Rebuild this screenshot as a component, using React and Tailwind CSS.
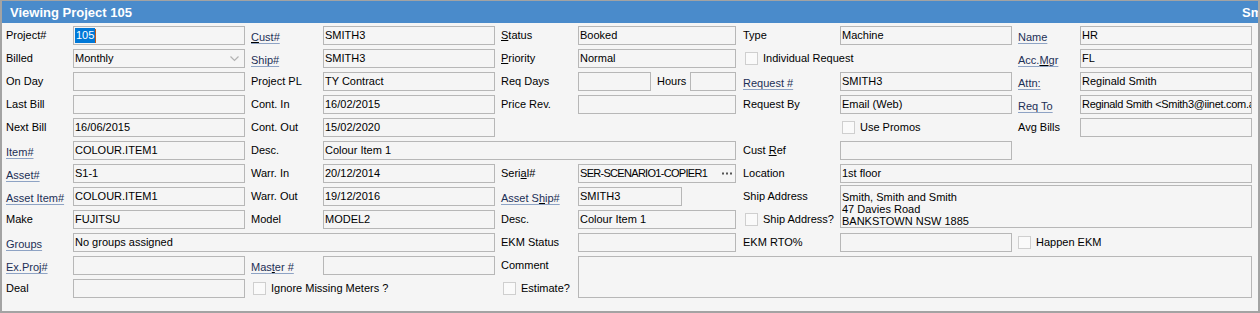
import React from "react";

const font = "font-['Liberation_Sans',Arial,sans-serif]";

function Label({ children, link, className = "" }) {
  if (link) {
    return (
      <div className={`flex items-center pt-[4px] whitespace-nowrap ${className}`}>
        <span className="text-[#1c2f55] underline underline-offset-[2px] decoration-[#8ea3c4]">{children}</span>
      </div>
    );
  }
  return (
    <div className={`flex items-center whitespace-nowrap text-black ${className}`}>
      <span>{children}</span>
    </div>
  );
}

// access key letter
function K({ children }) {
  return <span className="underline underline-offset-[1px] decoration-black">{children}</span>;
}

function Input({ children, className = "" }) {
  return (
    <div
      className={`h-[19px] border border-[#b7b7b7] bg-[#f5f5f5] pl-[1px] flex items-center whitespace-nowrap overflow-hidden text-black ${className}`}
    >
      {children}
    </div>
  );
}

function Check({ children, className = "" }) {
  return (
    <div className={`flex items-center gap-[5px] whitespace-nowrap ${className}`}>
      <span className="w-[13px] h-[13px] border border-[#cfcfcf] bg-[#fafafa] shrink-0" />
      <span>{children}</span>
    </div>
  );
}

function Empty() {
  return <div />;
}

export default function App() {
  return (
    <div
      className={`w-[1260px] h-[313px] overflow-hidden bg-[#f5f5f5] border-t border-l-2 border-r-2 border-b-2 border-[#a3a3a3] text-[11px] leading-[13px] ${font}`}
    >
      <div className="h-[22px] bg-[#4a8bcb] flex items-center justify-between pl-[8px] overflow-hidden">
        <span className="text-white font-bold text-[13px]">Viewing Project 105</span>
        <span className="text-white font-bold text-[13px] w-[16px] overflow-hidden whitespace-nowrap">Smith</span>
      </div>

      <div className="grid grid-cols-[67px_172px_78px_172px_83px_158px_104px_172px_68px_172px] grid-rows-[repeat(12,19px)] gap-y-[4px] pt-[3px] pl-[4px]">
        {/* row 1 */}
        <Label>Project#</Label>
        <Input>
          <span className="bg-[#0078d7] text-white px-[1px] leading-[15px]">105</span>
          <span className="w-[1px] h-[14px] bg-[#c05a1a]" />
        </Input>
        <Label link className="pl-[6px]">
          <K>C</K>ust#
        </Label>
        <Input>SMITH3</Input>
        <Label className="pl-[6px]">
          <K>S</K>tatus
        </Label>
        <Input>Booked</Input>
        <Label className="pl-[7px]">Type</Label>
        <Input>Machine</Input>
        <Label link className="pl-[6px]">Name</Label>
        <Input>HR</Input>

        {/* row 2 */}
        <Label>Billed</Label>
        <Input className="justify-between pr-[5px]">
          <span>Monthly</span>
          <svg width="9" height="6" viewBox="0 0 9 6">
            <path d="M0.5 0.5 L4.5 4.5 L8.5 0.5" fill="none" stroke="#b3b3b3" strokeWidth="1.2" />
          </svg>
        </Input>
        <Label link className="pl-[6px]">Ship#</Label>
        <Input>SMITH3</Input>
        <Label className="pl-[6px]">
          <K>P</K>riority
        </Label>
        <Input>Normal</Input>
        <Check className="col-span-2 pl-[9px]">Individual Request</Check>
        <Label link className="pl-[6px]">
          Acc.<K>M</K>gr
        </Label>
        <Input>FL</Input>

        {/* row 3 */}
        <Label>On Day</Label>
        <Input />
        <Label className="pl-[6px]">Project PL</Label>
        <Input>TY Contract</Input>
        <Label className="pl-[6px]">Req Days</Label>
        <div className="flex items-center">
          <Input className="w-[73px]" />
          <span className="ml-[6px] w-[33px]">Hours</span>
          <Input className="w-[46px]" />
        </div>
        <Label link className="pl-[7px]">Request #</Label>
        <Input>SMITH3</Input>
        <Label link className="pl-[6px]">Attn:</Label>
        <Input>Reginald Smith</Input>

        {/* row 4 */}
        <Label>Last Bill</Label>
        <Input />
        <Label className="pl-[6px]">Cont. In</Label>
        <Input>16/02/2015</Input>
        <Label className="pl-[6px]">Price Rev.</Label>
        <Input />
        <Label className="pl-[7px]">Request By</Label>
        <Input>Email (Web)</Input>
        <Label link className="pl-[6px]">Req To</Label>
        <Input>
          <span className="tracking-[-0.3px]">Reginald Smith &lt;Smith3@iinet.com.au&gt;</span>
        </Input>

        {/* row 5 */}
        <Label>Next Bill</Label>
        <Input className="bg-[#ebebeb]">16/06/2015</Input>
        <Label className="pl-[6px]">Cont. Out</Label>
        <Input>15/02/2020</Input>
        <Empty />
        <Empty />
        <Empty />
        <Check className="pl-[2px]">Use Promos</Check>
        <Label className="pl-[6px]">Avg Bills</Label>
        <Input />

        {/* row 6 */}
        <Label link>Item#</Label>
        <Input>COLOUR.ITEM1</Input>
        <Label className="pl-[6px]">Desc.</Label>
        <Input className="col-span-3">Colour Item 1</Input>
        <Label className="pl-[7px]">
          Cust <K>R</K>ef
        </Label>
        <Input />
        <Empty />
        <Empty />

        {/* row 7 */}
        <Label link>Asset#</Label>
        <Input>S1-1</Input>
        <Label className="pl-[6px]">Warr. In</Label>
        <Input>20/12/2014</Input>
        <Label className="pl-[6px]">
          Seri<K>a</K>l#
        </Label>
        <Input className="justify-between pr-[3px]">
          <span className="tracking-[-0.7px]">SER-SCENARIO1-COPIER1</span>
          <svg width="10" height="3" viewBox="0 0 10 3">
            <rect x="0" y="0.5" width="2" height="2" fill="#555" />
            <rect x="4" y="0.5" width="2" height="2" fill="#555" />
            <rect x="8" y="0.5" width="2" height="2" fill="#555" />
          </svg>
        </Input>
        <Label className="pl-[7px]">Location</Label>
        <Input className="col-span-3">1st floor</Input>

        {/* row 8 */}
        <Label link>Asset Item#</Label>
        <Input>COLOUR.ITEM1</Input>
        <Label className="pl-[6px]">Warr. Out</Label>
        <Input>19/12/2016</Input>
        <Label link className="pl-[6px]">
          Asset S<K>h</K>ip#
        </Label>
        <Input className="w-[104px]">SMITH3</Input>
        <Label className="pl-[7px]">Ship Address</Label>
        <div className="col-span-3 row-span-2 -mt-[2px] h-[43px] border border-[#b7b7b7] bg-[#f5f5f5] pl-[1px] pt-[5px] leading-[12px] text-black">
          <div>Smith, Smith and Smith</div>
          <div>47 Davies Road</div>
          <div>BANKSTOWN NSW 1885</div>
        </div>

        {/* row 9 */}
        <Label>Make</Label>
        <Input>FUJITSU</Input>
        <Label className="pl-[6px]">Model</Label>
        <Input>MODEL2</Input>
        <Label className="pl-[6px]">Desc.</Label>
        <Input>Colour Item 1</Input>
        <Check className="pl-[9px]">Ship Address?</Check>

        {/* row 10 */}
        <Label link>Groups</Label>
        <Input className="col-span-3">No groups assigned</Input>
        <Label className="pl-[6px]">EKM Status</Label>
        <Input />
        <Label className="pl-[7px]">EKM RTO%</Label>
        <Input />
        <Check className="col-span-2 pl-[6px]">Happen EKM</Check>

        {/* row 11 */}
        <Label link>Ex.Proj#</Label>
        <Input />
        <Label link className="pl-[6px]">
          Mas<K>t</K>er #
        </Label>
        <Input />
        <Label className="pl-[6px]">Comment</Label>
        <div className="col-span-5 row-span-2 border border-[#b7b7b7] bg-[#f5f5f5]" />

        {/* row 12 */}
        <Label>Deal</Label>
        <Input />
        <Check className="col-span-2 pl-[8px]">Ignore Missing Meters ?</Check>
        <Check className="pl-[8px]">Estimate?</Check>
      </div>
    </div>
  );
}
